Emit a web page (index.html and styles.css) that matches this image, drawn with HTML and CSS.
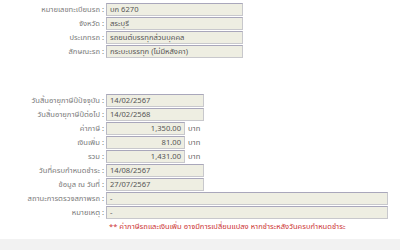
FILE: index.html
```html
<!DOCTYPE html>
<html lang="th">
<head>
<meta charset="utf-8">
<link rel="stylesheet" href="styles.css">
</head>
<body>
<div class="page">
  <div class="section first">
    <div class="row"><div class="label">หมายเลขทะเบียนรถ :</div><div class="box w-lg">บก 6270</div></div>
    <div class="row"><div class="label">จังหวัด :</div><div class="box w-lg">สระบุรี</div></div>
    <div class="row"><div class="label">ประเภทรถ :</div><div class="box w-lg">รถยนต์บรรทุกส่วนบุคคล</div></div>
    <div class="row"><div class="label">ลักษณะรถ :</div><div class="box w-lg">กระบะบรรทุก (ไม่มีหลังคา)</div></div>
  </div>
  <div class="section second">
    <div class="row"><div class="label">วันสิ้นอายุภาษีปีปัจจุบัน :</div><div class="box w-md">14/02/2567</div></div>
    <div class="row"><div class="label">วันสิ้นอายุภาษีปีต่อไป :</div><div class="box w-md">14/02/2568</div></div>
    <div class="row"><div class="label">ค่าภาษี :</div><div class="box w-sm num">1,350.00</div><span class="unit">บาท</span></div>
    <div class="row"><div class="label">เงินเพิ่ม :</div><div class="box w-sm num">81.00</div><span class="unit">บาท</span></div>
    <div class="row"><div class="label">รวม :</div><div class="box w-sm num">1,431.00</div><span class="unit">บาท</span></div>
    <div class="row"><div class="label">วันที่ครบกำหนดชำระ :</div><div class="box w-md">14/08/2567</div></div>
    <div class="row"><div class="label">ข้อมูล ณ วันที่ :</div><div class="box w-md">27/07/2567</div></div>
    <div class="row"><div class="label">สถานะการตรวจสภาพรถ :</div><div class="box w-xl">-</div></div>
    <div class="row"><div class="label">หมายเหตุ :</div><div class="box w-xl">-</div></div>
    <div class="row"><div class="label"></div><div class="note">** ค่าภาษีรถและเงินเพิ่ม อาจมีการเปลี่ยนแปลง หากชำระหลังวันครบกำหนดชำระ</div></div>
  </div>
</div>
<div class="footer"></div>
</body>
</html>
```
FILE: styles.css
```css
html, body {
  margin: 0;
  padding: 0;
  background: #ffffff;
}
body {
  font-family: "Noto Sans Thai", "Noto Sans", sans-serif;
  font-size: 7.6px;
  color: #666666;
  width: 400px;
  height: 250px;
  overflow: hidden;
  display: flex;
  flex-direction: column;
}
.page {
  flex: 1;
  display: flex;
  flex-direction: column;
  padding-top: 3px;
}
.section {
  display: flex;
  flex-direction: column;
  gap: 1px;
}
.second {
  margin-top: 36px;
}
.row {
  display: flex;
  align-items: center;
  height: 13px;
  line-height: 11px;
}
.label {
  width: 106px;
  text-align: right;
  padding-right: 2px;
  box-sizing: border-box;
  white-space: nowrap;
  color: #7a7a7a;
}
.box {
  height: 13px;
  box-sizing: border-box;
  background: #eeeee2;
  border: 1px solid #c8c8cc;
  border-top-color: #a9a7bb;
  border-left-color: #b8b8c4;
  padding: 0 3px;
  line-height: 11px;
  color: #555555;
  white-space: nowrap;
  overflow: hidden;
}
.w-lg { width: 137px; }
.w-md { width: 98px; }
.w-sm { width: 79px; }
.w-xl { width: 282px; }
.num { text-align: right; }
.unit {
  margin-left: 3px;
  color: #666666;
}
.note {
  color: #cc3333;
  white-space: nowrap;
  padding-left: 3px;
}
.footer {
  height: 11px;
  background: #f2f2f2;
}
```
